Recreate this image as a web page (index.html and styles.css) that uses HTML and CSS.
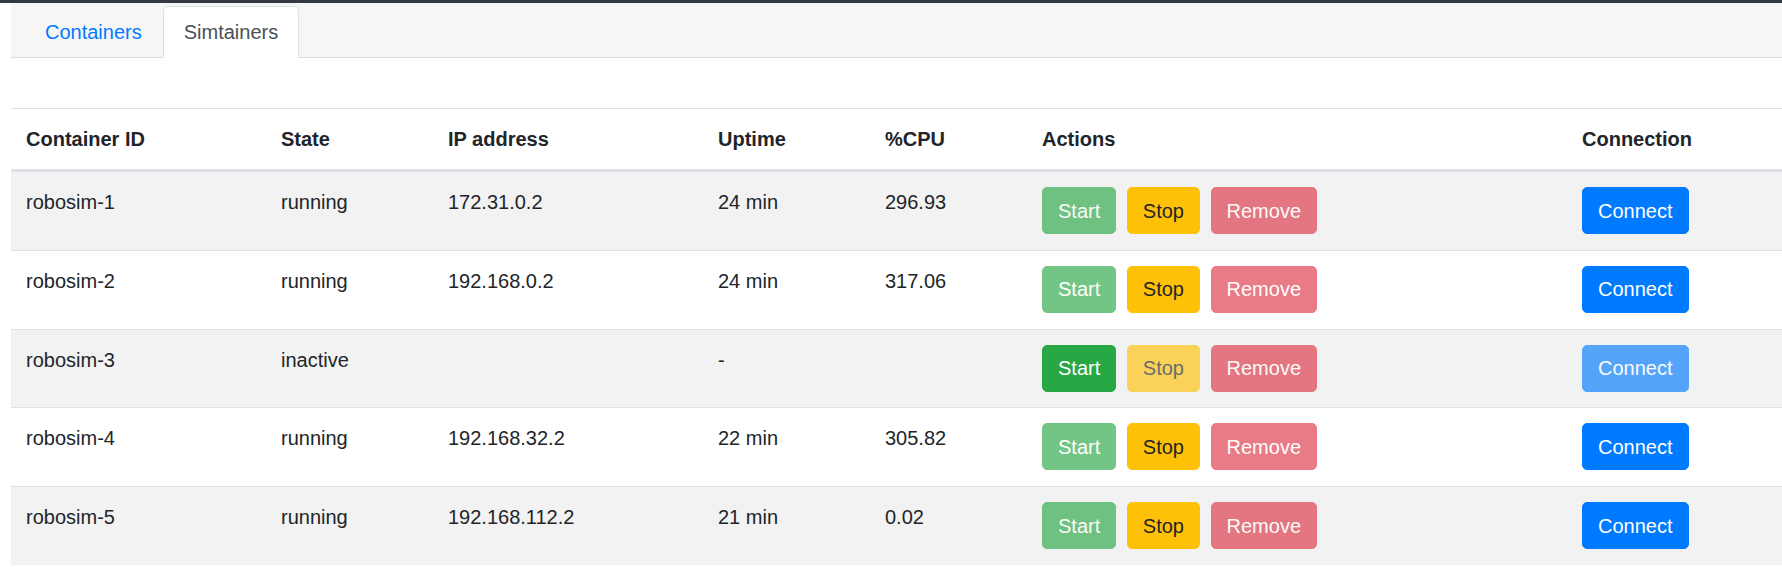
FILE: index.html
```html
<!DOCTYPE html>
<html lang="en">
<head>
<meta charset="utf-8">
<title>Simtainers</title>
<link rel="stylesheet" href="styles.css">
</head>
<body>
<div class="topbar"></div>
<div class="page">
  <div class="tabbar">
    <ul class="tabs">
      <li><a class="tab" href="#">Containers</a></li>
      <li><a class="tab active" href="#">Simtainers</a></li>
    </ul>
  </div>
  <table class="grid">
    <colgroup>
      <col class="c-id"><col class="c-state"><col class="c-ip"><col class="c-up"><col class="c-cpu"><col class="c-act"><col class="c-conn">
    </colgroup>
    <thead>
      <tr><th>Container ID</th><th>State</th><th>IP address</th><th>Uptime</th><th>%CPU</th><th>Actions</th><th>Connection</th></tr>
    </thead>
    <tbody>
      <tr>
        <td>robosim-1</td><td>running</td><td>172.31.0.2</td><td>24 min</td><td>296.93</td>
        <td><button class="btn green off">Start</button> <button class="btn yellow">Stop</button> <button class="btn red off">Remove</button></td>
        <td><button class="btn blue">Connect</button></td>
      </tr>
      <tr>
        <td>robosim-2</td><td>running</td><td>192.168.0.2</td><td>24 min</td><td>317.06</td>
        <td><button class="btn green off">Start</button> <button class="btn yellow">Stop</button> <button class="btn red off">Remove</button></td>
        <td><button class="btn blue">Connect</button></td>
      </tr>
      <tr>
        <td>robosim-3</td><td>inactive</td><td></td><td>-</td><td></td>
        <td><button class="btn green">Start</button> <button class="btn yellow off">Stop</button> <button class="btn red off">Remove</button></td>
        <td><button class="btn blue off">Connect</button></td>
      </tr>
      <tr>
        <td>robosim-4</td><td>running</td><td>192.168.32.2</td><td>22 min</td><td>305.82</td>
        <td><button class="btn green off">Start</button> <button class="btn yellow">Stop</button> <button class="btn red off">Remove</button></td>
        <td><button class="btn blue">Connect</button></td>
      </tr>
      <tr>
        <td>robosim-5</td><td>running</td><td>192.168.112.2</td><td>21 min</td><td>0.02</td>
        <td><button class="btn green off">Start</button> <button class="btn yellow">Stop</button> <button class="btn red off">Remove</button></td>
        <td><button class="btn blue">Connect</button></td>
      </tr>
    </tbody>
  </table>
</div>
</body>
</html>
```

FILE: styles.css
```css
html, body {
  margin: 0;
  padding: 0;
  overflow: hidden;
  background: #fff;
}
body {
  font-family: "Liberation Sans", Arial, sans-serif;
  font-size: 20px;
  line-height: 30px;
  color: #212529;
}
.topbar {
  height: 3px;
  background: #343a40;
}
.page {
  padding-left: 11px;
}
.tabbar {
  background: #f6f6f6;
  border-bottom: 1px solid #dcdcdc;
  padding: 3px 0 0 13px;
}
.tabs {
  list-style: none;
  margin: 0 0 -1px 0;
  padding: 0;
  display: flex;
}
.tab {
  display: block;
  padding: 10px 20px;
  line-height: 30px;
  border: 1px solid transparent;
  border-radius: 5px 5px 0 0;
  color: #007bff;
  text-decoration: none;
}
.tab.active {
  background: #fff;
  color: #495057;
  border-color: #dee2e6 #dee2e6 #fff;
}
.grid {
  margin-top: 50px;
  width: 1800px;
  border-collapse: collapse;
  table-layout: fixed;
}
.c-id { width: 255px; }
.c-state { width: 167px; }
.c-ip { width: 270px; }
.c-up { width: 167px; }
.c-cpu { width: 157px; }
.c-act { width: 540px; }
.grid th, .grid td {
  text-align: left;
  vertical-align: top;
  padding: 15px 15px 15.8px;
  border-top: 1px solid #dee2e6;
  white-space: nowrap;
}
.grid th {
  font-weight: bold;
  padding-bottom: 15px;
}
.grid thead th {
  border-bottom: 3px solid #dee2e6;
}
.grid tbody tr:nth-child(odd) {
  background: #f2f2f2;
}
.btn {
  font-family: inherit;
  font-size: 20px;
  line-height: 30px;
  padding: 7.5px 15px;
  border: 1px solid transparent;
  border-radius: 5px;
  color: #fff;
  margin: 0 5px 0 0;
  display: inline-block;
  vertical-align: top;
  cursor: pointer;
}
.btn.off { opacity: 0.65; }
.green { background: #28a745; border-color: #28a745; }
.yellow { background: #ffc107; border-color: #ffc107; color: #212529; }
.red { background: #dc3545; border-color: #dc3545; }
.blue { background: #007bff; border-color: #007bff; }
```
